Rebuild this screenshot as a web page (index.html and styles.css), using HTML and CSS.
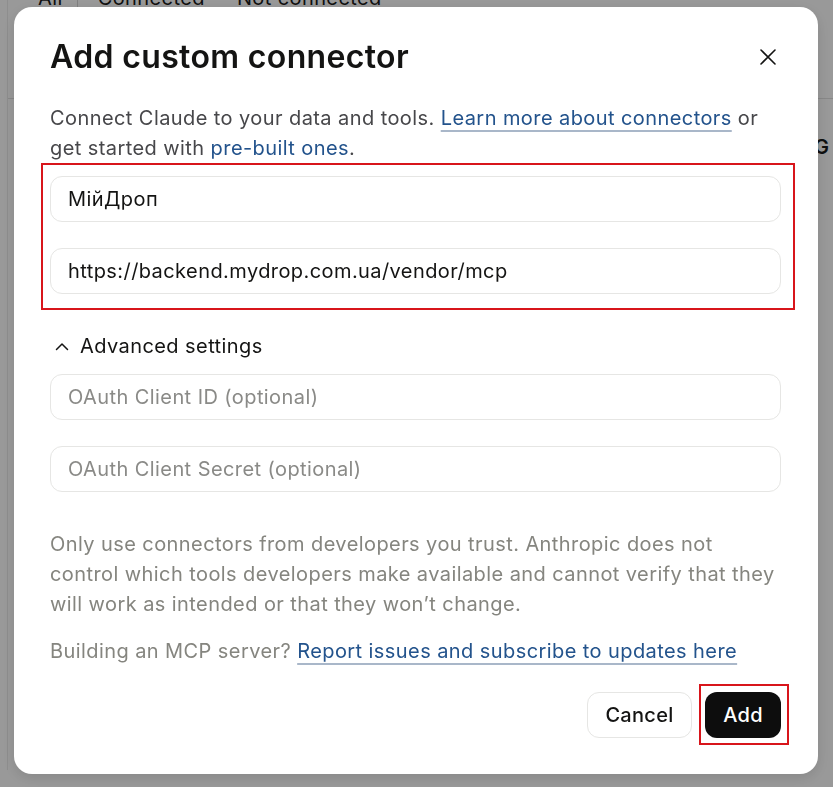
FILE: index.html
```html
<!DOCTYPE html>
<html lang="en">
<head>
<meta charset="utf-8">
<title>Add custom connector</title>
<link rel="stylesheet" href="styles.css">
</head>
<body>
  <div class="page">
    <div class="tabs">
      <span class="tab">All</span>
      <span class="tab-sep"></span>
      <span class="tab">Connected</span>
      <span class="tab">Not connected</span>
    </div>
    <div class="page-rule"></div>
    <div class="page-g">G</div>
  </div>
  <div class="backdrop"></div>

  <div class="modal" role="dialog" aria-labelledby="dlg-title">
    <div class="modal-head">
      <h1 id="dlg-title" class="modal-title">Add custom connector</h1>
      <button class="close-btn" aria-label="Close">
        <svg width="16" height="16" viewBox="0 0 16 16" fill="none" stroke="#141413" stroke-width="1.6" stroke-linecap="round"><path d="M1 1 L15 15 M15 1 L1 15"/></svg>
      </button>
    </div>

    <p class="intro">Connect Claude to your data and tools. <a href="#" class="link">Learn more about connectors</a> or get started with <a href="#" class="link plain">pre-built ones</a>.</p>

    <div class="fields marked">
      <input class="field" type="text" value="МійДроп">
      <input class="field" type="text" value="https://backend.mydrop.com.ua/vendor/mcp">
    </div>

    <div class="advanced">
      <svg class="chev" width="14" height="9" viewBox="0 0 14 9" fill="none" stroke="#141413" stroke-width="1.5" stroke-linecap="round" stroke-linejoin="round"><path d="M1.5 7.5 L7 2 L12.5 7.5"/></svg>
      <span>Advanced settings</span>
    </div>

    <div class="fields">
      <input class="field" type="text" placeholder="OAuth Client ID (optional)">
      <input class="field" type="text" placeholder="OAuth Client Secret (optional)">
    </div>

    <p class="note">Only use connectors from developers you trust. Anthropic does not control which tools developers make available and cannot verify that they will work as intended or that they won’t change.</p>

    <p class="note build">Building an MCP server? <a href="#" class="link">Report issues and subscribe to updates here</a></p>

    <div class="actions">
      <button class="btn btn-cancel">Cancel</button>
      <button class="btn btn-add marked-add">Add</button>
    </div>
  </div>
</body>
</html>
```

FILE: styles.css
```css
* { box-sizing: border-box; }

html, body {
  margin: 0;
  padding: 0;
  width: 833px;
  height: 787px;
  overflow: hidden;
}

body {
  font-family: "Inter", "Noto Sans", sans-serif;
  background: #ffffff;
  position: relative;
}

/* background page */
.page {
  width: 833px;
  height: 787px;
  border-left: 1px solid #ededed;
  margin-left: 7px;
}

.tabs {
  display: flex;
  align-items: center;
  gap: 32px;
  margin-top: -17px;
  padding-left: 30px;
  font-size: 20px;
  letter-spacing: 0.4px;
  color: #1a1a1a;
  height: 30px;
}

.tab-sep {
  width: 1px;
  height: 30px;
  background: #d6d6d6;
  margin: 0 -12px 0 -18px;
}

.page-rule {
  margin: 85px 0 0 0;
  height: 1px;
  background: #e2e2e2;
}

.page-g {
  margin: 36px 0 0 806px;
  font-size: 20px;
  font-weight: 600;
  color: #1a1a1a;
}

.backdrop {
  position: fixed;
  inset: 0;
  background: rgba(0, 0, 0, 0.4);
}

/* modal */
.modal {
  position: fixed;
  left: 14px;
  top: 7px;
  width: 804px;
  height: 767px;
  background: #ffffff;
  border-radius: 18px;
  padding: 30px 37px 36px 36px;
  box-shadow: 0 4px 14px rgba(0, 0, 0, 0.12);
  display: flex;
  flex-direction: column;
  letter-spacing: 0.42px;
}

.modal-head {
  display: flex;
  align-items: center;
  justify-content: space-between;
}

.modal-title {
  margin: 0;
  font-size: 32px;
  line-height: 40px;
  font-weight: 600;
  letter-spacing: 0.35px;
  color: #141413;
}

.close-btn {
  width: 28px;
  height: 28px;
  margin-right: -1px;
  border: 0;
  background: transparent;
  padding: 0;
  display: flex;
  align-items: center;
  justify-content: center;
}

.intro {
  margin: 26px 0 0 0;
  font-size: 20px;
  line-height: 30px;
  color: #47474a;
}

.link {
  color: #23538c;
  text-decoration: underline;
  text-decoration-color: #a9b7c9;
  text-decoration-thickness: 1.5px;
  text-underline-offset: 5px;
}

.link.plain {
  text-decoration-color: transparent;
}

.fields {
  display: flex;
  flex-direction: column;
  gap: 26px;
  margin-top: 13px;
}

.marked {
  position: relative;
}

.marked::after {
  content: "";
  position: absolute;
  left: -9px;
  right: -14px;
  top: -13px;
  bottom: -16px;
  border: 2px solid #d8151b;
  pointer-events: none;
}

.field {
  width: 100%;
  height: 46px;
  border: 1px solid #e6e6e4;
  border-radius: 12px;
  padding: 0 17px;
  font-family: "Inter", "Noto Sans", sans-serif;
  font-size: 20px;
  letter-spacing: 0.42px;
  color: #141413;
  background: #ffffff;
  outline: none;
}

.field::placeholder {
  color: #8a8a87;
}

.advanced {
  display: flex;
  align-items: center;
  gap: 11px;
  margin-top: 38px;
  margin-left: 5px;
  font-size: 20px;
  line-height: 28px;
  color: #141413;
}

.advanced + .fields {
  margin-top: 14px;
}

.note {
  margin: 37px 0 0 0;
  font-size: 20px;
  line-height: 30px;
  color: #85857f;
}

.note.build {
  margin-top: 17px;
}

.actions {
  margin-top: auto;
  display: flex;
  justify-content: flex-end;
  gap: 13px;
}

.btn {
  height: 46px;
  border-radius: 12px;
  font-family: "Inter", "Noto Sans", sans-serif;
  font-size: 20px;
  font-weight: 500;
  letter-spacing: 0.3px;
  padding: 0 10px;
}

.btn-cancel {
  width: 105px;
  background: #ffffff;
  color: #141413;
  border: 1px solid #e6e6e4;
}

.btn-add {
  width: 76px;
  background: #0d0d0d;
  color: #ffffff;
  border: 0;
}

.marked-add {
  position: relative;
}

.marked-add::after {
  content: "";
  position: absolute;
  left: -6px;
  right: -8px;
  top: -8px;
  bottom: -7px;
  border: 2px solid #d8151b;
  pointer-events: none;
}
```
